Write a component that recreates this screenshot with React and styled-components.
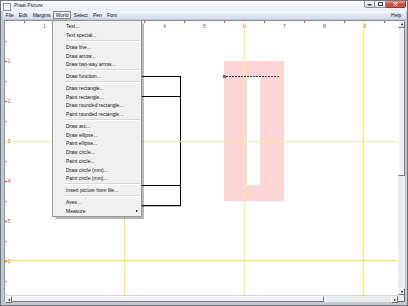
import React from "react";
import styled, { createGlobalStyle } from "styled-components";

const GlobalStyle = createGlobalStyle`
  html, body { margin: 0; padding: 0; background: #ffffff; }
  body { font-family: "Liberation Sans", Arial, sans-serif; }
`;

const Window = styled.div`
  position: relative;
  box-sizing: border-box;
  width: 408px;
  height: 306px;
  display: flex;
  flex-direction: column;
  background: #c3c9d1;
  border: 1px solid #6f737a;
  padding: 0 2px 3px 3px;
  overflow: hidden;
`;

const TitleBar = styled.div`
  height: 10px;
  margin: 0 -2px 0 -3px;
  display: flex;
  align-items: flex-start;
  background: linear-gradient(#fbfcfd, #e9edf2);
  position: relative;
`;

const AppIcon = styled.div`
  width: 6px;
  height: 6px;
  margin: 2px 0 0 2px;
  border: 1px solid #8a8f96;
  background: #f6f6f6;
`;

const Title = styled.span`
  font-size: 5px;
  line-height: 9px;
  margin-left: 3px;
  color: #222;
`;

const Controls = styled.div`
  margin-left: auto;
  margin-right: 1px;
  display: flex;
  height: 7px;
  margin-top: -1px;
`;

const CtlButton = styled.div`
  box-sizing: border-box;
  width: ${(p) => p.$w}px;
  height: 8px;
  display: flex;
  align-items: center;
  justify-content: center;
  border: 1px solid ${(p) => (p.$close ? "#8d3b32" : "#8b9099")};
  border-left-width: ${(p) => (p.$first ? 1 : 0)}px;
  border-radius: ${(p) => (p.$close ? "0 0 2px 0" : p.$first ? "0 0 0 2px" : "0")};
  background: ${(p) =>
    p.$close
      ? "linear-gradient(#e5a093, #c7473a 55%, #d35b49)"
      : "linear-gradient(#f6f7f9, #dde2e8)"};
`;

const MenuBar = styled.div`
  height: 9px;
  margin: 0 -1px 0 -1px;
  display: flex;
  align-items: center;
  padding-left: 0;
  background: linear-gradient(#f7f9fc, #dde5f0 55%, #d4ddea);
  border-bottom: 1px solid #bcc6d4;
  box-sizing: border-box;
`;

const MenuItem = styled.div`
  font-size: 5px;
  line-height: 6px;
  padding: 0 1.6px;
  margin-right: ${(p) => p.$gap || 0}px;
  color: #111;
  border: 1px solid ${(p) => (p.$open ? "#7f8590" : "transparent")};
  background: ${(p) => (p.$open ? "#f3f4f6" : "transparent")};
  margin-left: ${(p) => (p.$right ? "auto" : "0")};
`;

const Main = styled.div`
  flex: 1;
  display: flex;
  min-height: 0;
`;

const Canvas = styled.div`
  flex: 1;
  background: #ffffff;
  border-top: 1px solid #8e939a;
  border-left: 1px solid #8e939a;
  overflow: hidden;
`;

const VScroll = styled.div`
  width: 7px;
  display: flex;
  flex-direction: column;
  background: #eceded;
  border-top: 1px solid #8e939a;
`;

const HScrollRow = styled.div`
  height: 7px;
  display: flex;
`;

const HScroll = styled.div`
  flex: 1;
  display: flex;
  background: #eceded;
  border-left: 1px solid #8e939a;
  border-top: 1px solid #d4d6d9;
`;

const Corner = styled.div`
  width: 7px;
  background: #eceded;
  border-right: 1px solid #6d6d6d;
  border-bottom: 1px solid #6d6d6d;
  box-sizing: border-box;
`;

const ArrowBtn = styled.div`
  box-sizing: border-box;
  width: 7px;
  height: 7px;
  display: flex;
  align-items: center;
  justify-content: center;
  background: #efefef;
  border: 1px solid;
  border-color: #ffffff #6d6d6d #6d6d6d #ffffff;
`;

const Thumb = styled.div`
  box-sizing: border-box;
  flex: 0 0 ${(p) => p.$size}px;
  background: #f2f2f2;
  border: 1px solid;
  border-color: #ffffff #777b80 #777b80 #ffffff;
`;

const Track = styled.div`
  flex: 1;
`;

const Tri = styled.div`
  width: 0;
  height: 0;
  border: 1.5px solid transparent;
  ${(p) =>
    p.$dir === "up" && "border-bottom: 2px solid #000; border-top-width: 0; margin-top: -1px;"}
  ${(p) =>
    p.$dir === "down" && "border-top: 2px solid #000; border-bottom-width: 0;"}
  ${(p) =>
    p.$dir === "left" && "border-right: 2px solid #000; border-left-width: 0;"}
  ${(p) =>
    p.$dir === "right" && "border-left: 2px solid #000; border-right-width: 0;"}
`;

const Dropdown = styled.div`
  position: absolute;
  left: 51px;
  top: 19px;
  width: 90px;
  box-sizing: border-box;
  padding: 1px 0;
  background: #f0f0f0;
  border: 1px solid #979797;
  box-shadow: 1.5px 1.5px 1px rgba(0, 0, 0, 0.28);
`;

const DropItem = styled.div`
  height: 8.75px;
  display: flex;
  align-items: center;
  padding-left: 13px;
  font-size: 5px;
  color: #111;
  white-space: nowrap;
`;

const SubArrow = styled.span`
  margin-left: auto;
  margin-right: 3px;
  width: 0;
  height: 0;
  border-left: 2px solid #000;
  border-top: 1.5px solid transparent;
  border-bottom: 1.5px solid transparent;
`;

const Separator = styled.div`
  height: 3px;
  display: flex;
  align-items: center;
  padding: 0 1px 0 12px;
  &::after {
    content: "";
    flex: 1;
    height: 0;
    border-top: 1px solid #d9d9d9;
    border-bottom: 1px solid #ffffff;
  }
`;

const menu = [
  "Text...",
  "Text special...",
  "-",
  "Draw line...",
  "Draw arrow...",
  "Draw two-way arrow...",
  "-",
  "Draw function...",
  "-",
  "Draw rectangle...",
  "Paint rectangle...",
  "Draw rounded rectangle...",
  "Paint rounded rectangle...",
  "-",
  "Draw arc...",
  "Draw ellipse...",
  "Paint ellipse...",
  "Draw circle...",
  "Paint circle...",
  "Draw circle (mm)...",
  "Paint circle (mm)...",
  "-",
  "Insert picture from file...",
  "-",
  "Axes...",
  "Measure",
];

const RED = "#e4424a";

function Picture() {
  const xs = [1, 2, 3, 4, 5, 6, 7, 8, 9];
  const ys = [1, 2, 3, 4, 5, 6];
  return (
    <svg width="100%" height="100%" shapeRendering="crispEdges">
      <g transform="translate(-5,-21)">
        {/* rulers */}
        {xs.map((n) => (
          <g key={"x" + n}>
            <line x1={24.5 + 40 * (n - 1)} y1={21} x2={24.5 + 40 * (n - 1)} y2={23} stroke={RED} />
            <text
              x={4.5 + 40 * n}
              y={27.5}
              fontSize="5.5"
              fill={RED}
              textAnchor="middle"
              fontFamily="Liberation Sans, Arial, sans-serif"
            >
              {n}
            </text>
          </g>
        ))}
        <line x1={384.5} y1={21} x2={384.5} y2={23} stroke={RED} />
        {ys.map((n) => (
          <g key={"y" + n}>
            <line x1={5} y1={1.5 + 40 * n} x2={7} y2={1.5 + 40 * n} stroke={RED} opacity="0.7" />
            <line x1={5} y1={21.5 + 40 * n} x2={7} y2={21.5 + 40 * n} stroke={RED} />
            <text
              x={7.5}
              y={23.3 + 40 * n}
              fontSize="5.5"
              fill={RED}
              fontFamily="Liberation Sans, Arial, sans-serif"
            >
              {n}
            </text>
          </g>
        ))}
        <line x1={5} y1={281.5} x2={7} y2={281.5} stroke={RED} opacity="0.7" />

        {/* black rectangles */}
        <g stroke="#000" fill="none">
          <line x1={100} y1={76.5} x2={181} y2={76.5} />
          <line x1={100} y1={96.5} x2={181} y2={96.5} />
          <line x1={100} y1={185.5} x2={181} y2={185.5} />
          <line x1={100} y1={205.5} x2={181} y2={205.5} />
          <line x1={180.5} y1={76} x2={180.5} y2={206} />
        </g>
        <line x1={100} y1={206.5} x2={181} y2={206.5} stroke="#bbbbbb" />

        {/* pink painted rectangle with hole */}
        <rect x={224} y={61} width={60} height={140} fill="#fdd5d7" />
        <rect x={247} y={77} width={13} height={108} fill="#ffffff" />

        {/* yellow grid lines */}
        <g>
          <line x1={5} y1={141.5} x2={398} y2={141.5} stroke="#f4f08f" />
          <line x1={5} y1={260.5} x2={398} y2={260.5} stroke="#f2ea3c" />
          <line x1={124.5} y1={21} x2={124.5} y2={295} stroke="#f2ec55" />
          <line x1={244.5} y1={21} x2={244.5} y2={295} stroke="#f5f08a" />
          <line x1={363.5} y1={21} x2={363.5} y2={295} stroke="#f2ec55" />
        </g>

        {/* dotted selection line */}
        <line x1={226} y1={76.5} x2={280} y2={76.5} stroke="#333" strokeDasharray="2 1" />
        <rect x={222.5} y={75} width={3} height={3} fill="#6f6f6f" />
      </g>
    </svg>
  );
}

export default function App() {
  return (
    <>
      <GlobalStyle />
      <Window>
        <TitleBar>
          <AppIcon />
          <Title>Praat Picture</Title>
          <Controls>
            <CtlButton $w={11} $first>
              <svg width="5" height="3"><rect x="0.5" y="1" width="4" height="1.5" fill="#3c4148" /></svg>
            </CtlButton>
            <CtlButton $w={11}>
              <svg width="5" height="4"><rect x="0.5" y="0.5" width="4" height="3" fill="none" stroke="#3c4148" /></svg>
            </CtlButton>
            <CtlButton $w={20} $close>
              <svg width="5" height="4">
                <path d="M0.5 0.5 L4.5 3.5 M4.5 0.5 L0.5 3.5" stroke="#ffffff" strokeWidth="1.2" />
              </svg>
            </CtlButton>
          </Controls>
        </TitleBar>
        <MenuBar>
          <MenuItem>File</MenuItem>
          <MenuItem>Edit</MenuItem>
          <MenuItem>Margins</MenuItem>
          <MenuItem $open>World</MenuItem>
          <MenuItem>Select</MenuItem>
          <MenuItem>Pen</MenuItem>
          <MenuItem>Font</MenuItem>
          <MenuItem $right $gap={2}>Help</MenuItem>
        </MenuBar>
        <Main>
          <Canvas>
            <Picture />
          </Canvas>
          <VScroll>
            <ArrowBtn><Tri $dir="up" /></ArrowBtn>
            <Thumb $size={148} />
            <Track />
            <ArrowBtn><Tri $dir="down" /></ArrowBtn>
          </VScroll>
        </Main>
        <HScrollRow>
          <HScroll>
            <ArrowBtn><Tri $dir="left" /></ArrowBtn>
            <Thumb $size={312} />
            <Track />
            <ArrowBtn><Tri $dir="right" /></ArrowBtn>
          </HScroll>
          <Corner />
        </HScrollRow>
        <Dropdown>
          {menu.map((m, i) =>
            m === "-" ? (
              <Separator key={i} />
            ) : (
              <DropItem key={i}>
                {m}
                {m === "Measure" && <SubArrow />}
              </DropItem>
            )
          )}
        </Dropdown>
      </Window>
    </>
  );
}
